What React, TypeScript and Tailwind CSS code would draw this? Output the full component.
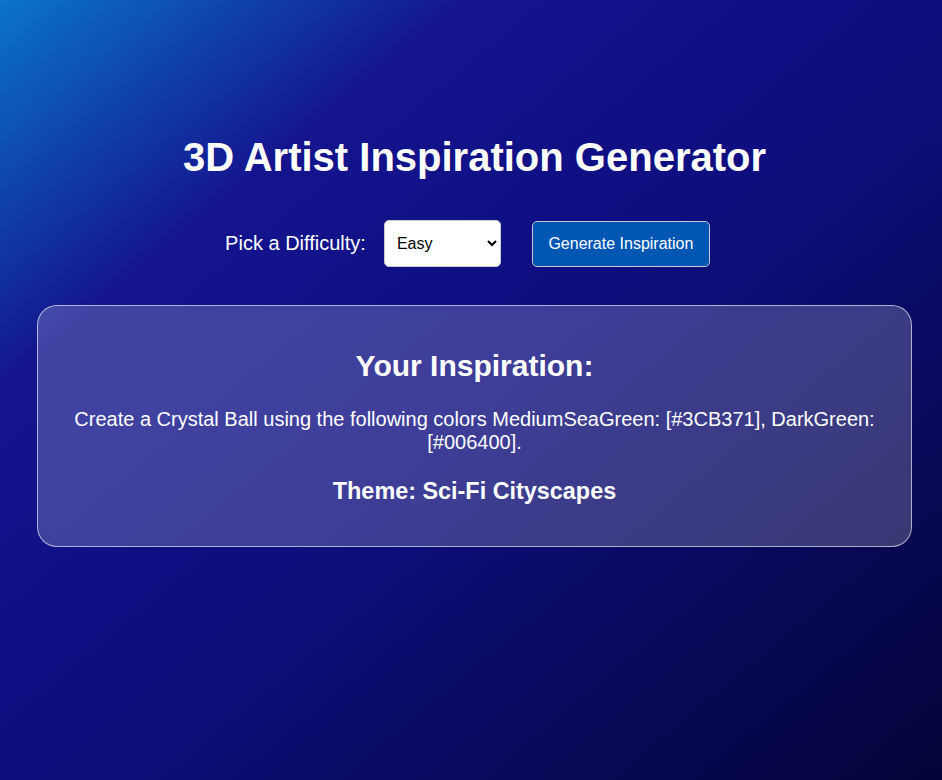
import React from "react";

export default function App() {
  return (
    <div
      className="min-h-[780px] w-full text-white"
      style={{
        fontFamily: '"Liberation Sans", Arial, sans-serif',
        background:
          "linear-gradient(to bottom right, #0a74ca 0%, #14148e 25%, #0e0e80 50%, #04043a 100%)",
      }}
    >
      <div className="pt-[134px] pl-[37px] pr-[30px] pb-10">
        <h1 className="text-center text-[40px] leading-[46px] font-bold m-0">
          3D Artist Inspiration Generator
        </h1>
        <div className="mt-[40px] flex items-center justify-center pr-[14px]">
          <label className="text-[20px] leading-[23px] text-white">Pick a Difficulty:</label>
          <select
            defaultValue="Easy"
            className="ml-[18px] w-[117px] h-[47px] rounded-[5px] border border-[#cccccc] bg-white pl-[8px] pr-[6px] text-[16px] text-black"
            style={{ fontFamily: '"Liberation Sans", Arial, sans-serif' }}
          >
            <option>Easy</option>
            <option>Medium</option>
            <option>Hard</option>
          </select>
          <button
            className="ml-[31px] h-[46px] w-[178px] rounded-[5px] border border-[#c8c8d8] bg-[#0056b3] text-[16px] text-white"
            style={{ fontFamily: '"Liberation Sans", Arial, sans-serif' }}
          >
            Generate Inspiration
          </button>
        </div>
        <div className="mt-[38px] rounded-[20px] border border-white/60 bg-white/20 px-[20px] pt-[20px] pb-[19px] text-center">
          <h2 className="mt-[23px] mb-[25px] text-[30px] leading-[34px] font-bold">
            Your Inspiration:
          </h2>
          <p className="text-[20px] leading-[23px]">
            Create a Crystal Ball using the following colors MediumSeaGreen: [#3CB371], DarkGreen: [#006400].
          </p>
          <h3 className="mt-[24px] mb-[22px] text-[23.4px] leading-[27px] font-bold">
            Theme: Sci-Fi Cityscapes
          </h3>
        </div>
      </div>
    </div>
  );
}
